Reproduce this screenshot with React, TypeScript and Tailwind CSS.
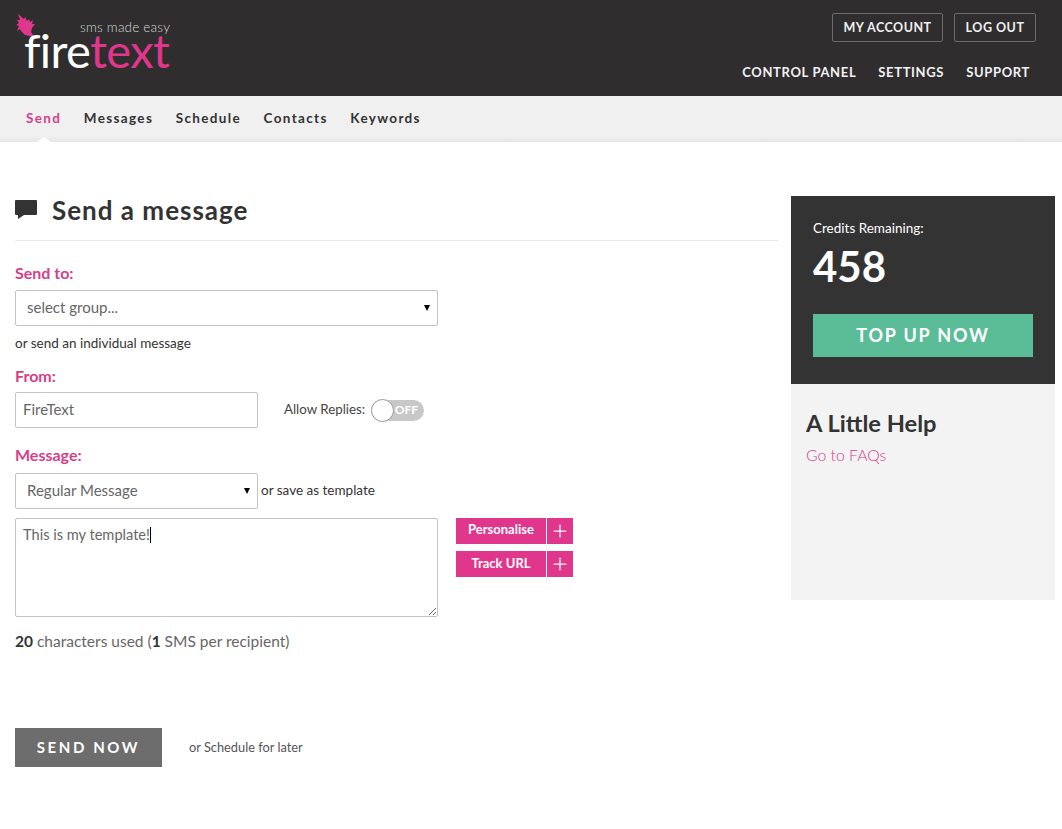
import { Plus } from "lucide-react";

const pink = "text-[#d5408a]";

const Logo = () => (
  <div className="relative w-[170px] h-[96px]">
    <svg className="absolute left-[15px] top-[14px]" width="21" height="25" viewBox="0 0 21 25">
      <path
        fill="#e0368c"
        d="M2 0 L8 5 L9 3 L11 7 L13 5 L14 8 L17 6 L16 10 L19 10 L16 14 L15 18 L17 21 L20 24 L14 22 L9 21 L5 17 L4 15 L1 17 L3 12 L0 11 L3 9 L1 6 L4 6 Z"
      />
    </svg>
    <span className="absolute left-[79px] top-[19px] text-[13.5px] leading-[17px] text-[#d8d8d8] tracking-[0.2px] font-light whitespace-nowrap">
      sms made easy
    </span>
    <span className="absolute left-[23px] top-[36px] text-[47px] leading-[28px] font-normal tracking-[-0.6px] whitespace-nowrap">
      <span className="text-white">fire</span>
      <span className="text-[#e0368c]">text</span>
    </span>
  </div>
);

const Header = () => (
  <header className="h-[96px] bg-[#2f2d2e] flex justify-between pl-[1px] pr-[26px]">
    <Logo />
    <div className="flex flex-col items-end">
      <div className="flex gap-[11px] mt-[13px]">
        <a className="h-[29px] w-[111px] border border-[#6b6b6b] rounded-[2px] flex items-center justify-center pt-[2px] text-[12.5px] font-bold tracking-[0.5px] text-[#f0f0f0]">
          MY ACCOUNT
        </a>
        <a className="h-[29px] w-[82px] border border-[#6b6b6b] rounded-[2px] flex items-center justify-center pt-[2px] text-[12.5px] font-bold tracking-[0.5px] text-[#f0f0f0]">
          LOG OUT
        </a>
      </div>
      <nav className="flex gap-[22px] mt-[21px] mr-[6px] text-[13px] leading-[18px] font-bold tracking-[0.65px] text-[#f2f2f2]">
        <a>CONTROL PANEL</a>
        <a>SETTINGS</a>
        <a>SUPPORT</a>
      </nav>
    </div>
  </header>
);

const SubNav = () => (
  <div className="relative h-[46px] bg-[linear-gradient(#f0f0f0_88%,#e5e5e5)] flex gap-[22.5px] pl-[26px] pt-[13px] text-[13.5px] leading-[18px] font-bold tracking-[1.35px] text-[#333]">
    <a className={pink}>Send</a>
    <a>Messages</a>
    <a>Schedule</a>
    <a>Contacts</a>
    <a>Keywords</a>
    <span className="absolute left-[37px] bottom-0 w-0 h-0 border-x-[7px] border-x-transparent border-b-[5px] border-b-white" />
  </div>
);

const Field = ({ label }: { label: string }) => (
  <div className={`text-[16px] leading-[20px] font-bold ${pink}`}>{label}</div>
);

const FakeSelect = ({ value, width }: { value: string; width: string }) => (
  <div className={`${width} h-[36px] border border-[#c4c4c4] rounded-[2px] flex items-center justify-between pl-[11px] pr-[7px] text-[15px] text-[#666]`}>
    <span className="pb-[2px]">{value}</span>
    <span className="w-0 h-0 border-x-[3.5px] border-x-transparent border-t-[6px] border-t-black" />
  </div>
);

const PinkButton = ({ label, raised }: { label: string; raised?: boolean }) => (
  <div className="flex h-[26px] gap-[1px] text-white">
    <div className={`w-[90px] bg-[#e0368c] flex items-center justify-center text-[13px] font-bold ${raised ? "pb-[3px]" : ""}`}>
      {label}
    </div>
    <div className="w-[26px] bg-[#e0368c] flex items-center justify-center">
      <Plus size={20} strokeWidth={1.5} />
    </div>
  </div>
);

const Form = () => (
  <main className="w-[763px] pt-[54px]">
    <div className="flex items-center h-[28px] pb-[16px] border-b border-[#e8e8e8] box-content">
      <svg width="22" height="19" viewBox="0 0 22 19" className="mb-[1px]">
        <path
          fill="#333"
          d="M1 0 H21 A1 1 0 0 1 22 1 V14 A1 1 0 0 1 21 15 H9 L3 19 V15 H1 A1 1 0 0 1 0 14 V1 A1 1 0 0 1 1 0 Z"
        />
      </svg>
      <h1 className="ml-[15px] text-[26px] leading-[30px] font-bold tracking-[1px] text-[#333]">Send a message</h1>
    </div>

    <div className="mt-[22px]">
      <Field label="Send to:" />
    </div>
    <div className="mt-[7px]">
      <FakeSelect value="select group..." width="w-[423px]" />
    </div>
    <p className="mt-[8px] text-[13.5px] leading-[18px] text-[#333]">or send an individual message</p>

    <div className="mt-[14px]">
      <Field label="From:" />
    </div>
    <div className="mt-[6px] flex items-center">
      <div className="w-[243px] h-[36px] border border-[#c4c4c4] rounded-[2px] flex items-center pl-[7px] pb-[2px] text-[15px] text-[#666]">
        FireText
      </div>
      <span className="ml-[26px] text-[13.3px] text-[#444]">Allow Replies:</span>
      <div className="relative ml-[6px] w-[53px] h-[21px] rounded-full bg-[#c8c8c8] text-white text-[12px] font-bold flex items-center justify-end pr-[6px]">
        OFF
        <span className="absolute left-0 top-[-1px] w-[23px] h-[23px] rounded-full bg-white border border-[#999]" />
      </div>
    </div>

    <div className="mt-[17px]">
      <Field label="Message:" />
    </div>
    <div className="mt-[8px] flex items-center">
      <FakeSelect value="Regular Message" width="w-[243px]" />
      <span className="ml-[3px] pb-[2px] text-[13.5px] text-[#333]">or save as template</span>
    </div>

    <div className="mt-[9px] flex">
      <div className="relative w-[423px] h-[99px] border border-[#c4c4c4] rounded-[2px] pl-[7px] pt-[6px] text-[14.6px] leading-[20px] text-[#666]">
        This is my template!<span className="inline-block w-px h-[16px] bg-black align-[-3px]" />
        <svg className="absolute right-[1px] bottom-[1px]" width="8" height="8" viewBox="0 0 8 8">
          <path d="M1 8 L8 1 M5 8 L8 5" stroke="#666" strokeWidth="1" />
        </svg>
      </div>
      <div className="ml-[18px] flex flex-col gap-[7px]">
        <PinkButton label="Personalise" raised />
        <PinkButton label="Track URL" />
      </div>
    </div>

    <p className="mt-[14px] text-[15.5px] leading-[20px] text-[#666]">
      <b className="text-[#333]">20</b> characters used (<b className="text-[#333]">1</b> SMS per recipient)
    </p>

    <div className="mt-[77px] flex items-center">
      <button className="w-[147px] h-[39px] bg-[#6d6d6d] text-white text-[15px] font-bold tracking-[2.6px]">
        SEND NOW
      </button>
      <span className="ml-[27px] text-[12.8px] text-[#555]">or Schedule for later</span>
    </div>
  </main>
);

const Sidebar = () => (
  <aside className="w-[264px] mt-[54px]">
    <div className="h-[188px] bg-[#333333] pl-[22px] pt-[23px] text-white">
      <div className="text-[13.5px] leading-[18px]">Credits Remaining:</div>
      <div className="mt-[4px] text-[42px] leading-[50px] font-bold">458</div>
      <div className="mt-[23px] w-[220px] h-[43px] bg-[#5bbd98] flex items-center justify-center text-[18px] font-bold tracking-[1.8px]">
        TOP UP NOW
      </div>
    </div>
    <div className="h-[216px] bg-[#f3f3f3] pl-[15px] pt-[25px]">
      <h2 className="text-[23.7px] leading-[28px] font-bold text-[#333]">A Little Help</h2>
      <a className="block mt-[8px] text-[15.8px] leading-[20px] font-light text-[#d6408f]">Go to FAQs</a>
    </div>
  </aside>
);

export default function App() {
  return (
    <div className="min-h-[829px] bg-white font-['Lato',sans-serif]">
      <Header />
      <SubNav />
      <div className="flex pl-[15px] gap-[13px]">
        <Form />
        <Sidebar />
      </div>
    </div>
  );
}
